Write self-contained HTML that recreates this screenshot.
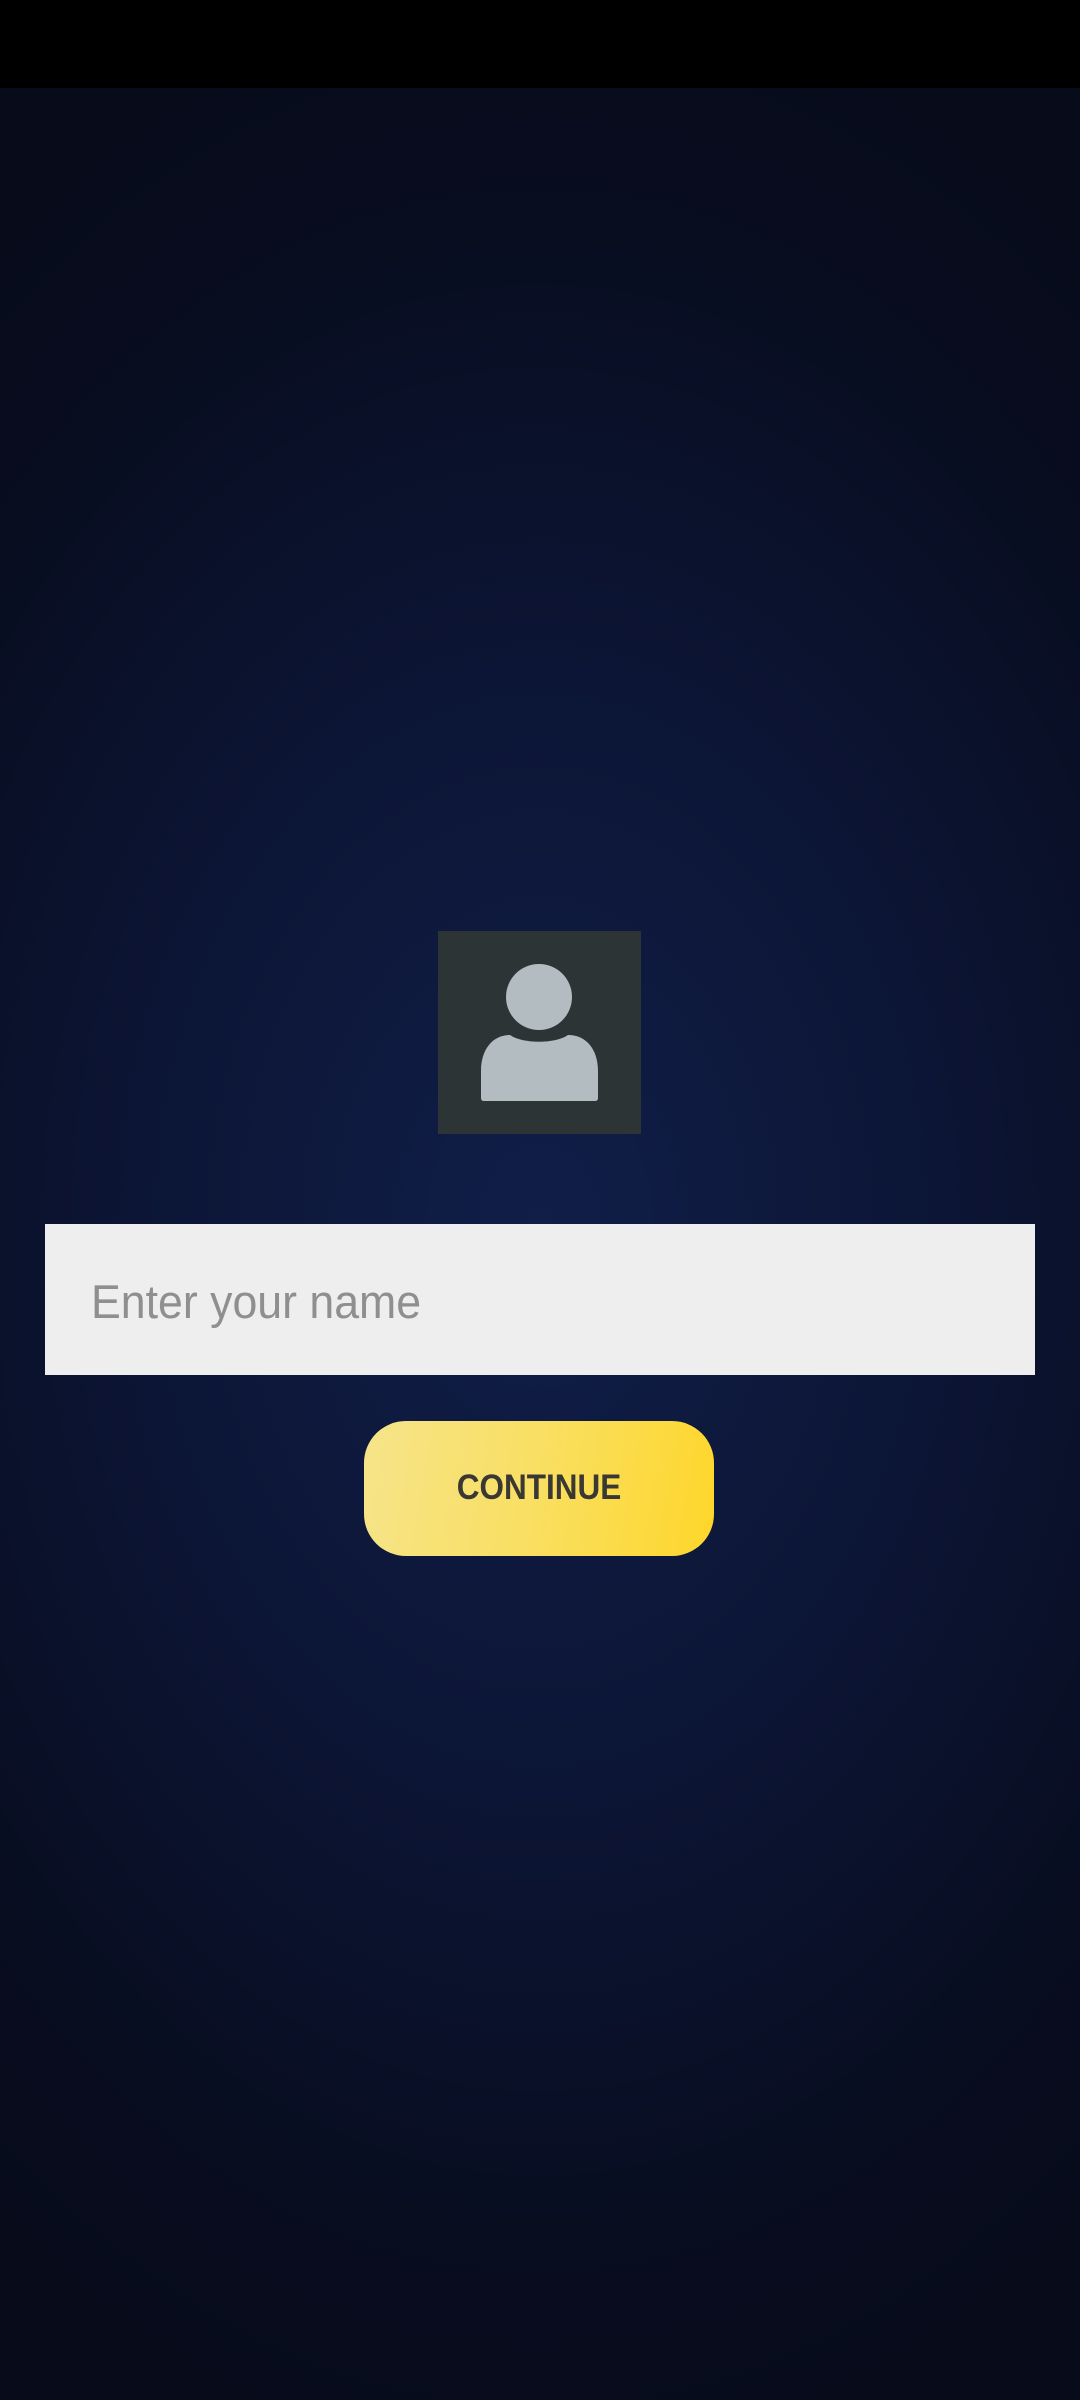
<!DOCTYPE html>
<html><head><meta charset="utf-8">
<style>
html,body{margin:0;padding:0;}
body{width:1080px;height:2400px;position:relative;overflow:hidden;
background:radial-gradient(ellipse 900px 1250px at 540px 1230px,#101e48 0%,#0c1535 45%,#080d20 80%,#070b1a 100%);
font-family:"Liberation Sans",sans-serif;}
.status{position:absolute;left:0;top:0;width:1080px;height:88px;background:#000;}
.avatar{position:absolute;left:438px;top:931px;width:203px;height:203px;background:#2d3436;}
.input{position:absolute;left:45px;top:1224px;width:990px;height:151px;background:#eeeeee;}
.input span{position:absolute;left:46px;top:52px;font-size:47px;color:#8f8f8f;line-height:52px;white-space:nowrap;transform:scaleX(0.95);transform-origin:left center;}
.btn{position:absolute;left:364px;top:1421px;width:350px;height:135px;border-radius:42px;
background:linear-gradient(100deg,#f6e48a 0%,#f9df61 50%,#fed62a 100%);}
.btn span{position:absolute;left:0;right:0;top:47px;text-align:center;font-size:35px;font-weight:bold;color:#3a3833;line-height:40px;transform:scaleX(0.9);}
</style></head><body>
<div class="status"></div>
<div class="avatar">
<svg width="203" height="203" viewBox="0 0 203 203">
<path d="M43 167 L43 140 C43 118 55 104 72 104 C85 113 117 113 130 104 C148 104 160 118 160 140 L160 167 Q160 170 157 170 L46 170 Q43 170 43 167 Z" fill="#b2bcc1"/>
<circle cx="101" cy="66" r="33" fill="#b2bcc1"/>
</svg>
</div>
<div class="input"><span>Enter your name</span></div>
<div class="btn"><span>CONTINUE</span></div>
</body></html>
